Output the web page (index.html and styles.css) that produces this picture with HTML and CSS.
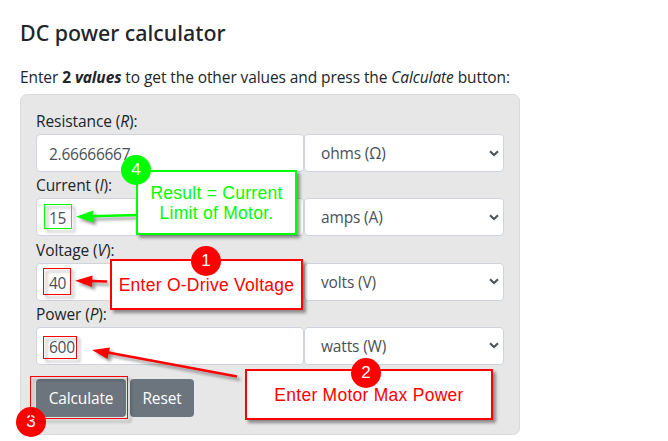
FILE: index.html
```html
<!DOCTYPE html>
<html lang="en">
<head>
<meta charset="utf-8">
<title>DC power calculator</title>
<link rel="stylesheet" href="styles.css">
</head>
<body>
<main class="page">
  <h1 class="title"><span>DC power calculator</span></h1>
  <p class="intro"><span>Enter <b>2 <i>values</i></b> to get the other values and press the <i>Calculate</i> button:</span></p>
  <form class="panel">
    <div class="row">
      <div class="label">Resistance (<i>R</i>):</div>
      <div class="group">
        <div class="input">2.66666667</div>
        <div class="select"><span class="unit">ohms (Ω)</span><svg class="chevron" viewBox="0 0 10 7"><path d="M1 1.2 5 5 9 1.2"/></svg></div>
      </div>
    </div>
    <div class="row">
      <div class="label">Current (<i>I</i>):</div>
      <div class="group">
        <div class="input">15</div>
        <div class="select"><span class="unit">amps (A)</span><svg class="chevron" viewBox="0 0 10 7"><path d="M1 1.2 5 5 9 1.2"/></svg></div>
      </div>
    </div>
    <div class="row">
      <div class="label">Voltage (<i>V</i>):</div>
      <div class="group">
        <div class="input">40</div>
        <div class="select"><span class="unit">volts (V)</span><svg class="chevron" viewBox="0 0 10 7"><path d="M1 1.2 5 5 9 1.2"/></svg></div>
      </div>
    </div>
    <div class="row">
      <div class="label">Power (<i>P</i>):</div>
      <div class="group">
        <div class="input">600</div>
        <div class="select"><span class="unit">watts (W)</span><svg class="chevron" viewBox="0 0 10 7"><path d="M1 1.2 5 5 9 1.2"/></svg></div>
      </div>
    </div>
    <div class="actions">
      <button type="button" class="btn calc">Calculate</button>
      <button type="button" class="btn reset">Reset</button>
    </div>
  </form>

  <svg class="arrows" viewBox="0 0 668 441">
    <g class="green"><path class="line" d="M138 215 90 216.3"/><path class="head" d="M76 216.7 93 210.5V222.2Z"/></g>
    <g class="red"><path class="line" d="M107 281.6 90 281"/><path class="head" d="M75 280.8 92.5 275.5 92 287Z"/></g>
    <g class="red"><path class="line" d="M237 376.5 108 352.6"/><path class="head" d="M92 350 110 347.5 107.5 359Z"/></g>
  </svg>
  <div class="mark green-mark mark-current"></div>
  <div class="mark mark-voltage"></div>
  <div class="mark mark-power"></div>
  <div class="note green-note note-current"><span>Result = Current<br>Limit of Motor.</span></div>
  <div class="note note-voltage"><span>Enter O-Drive Voltage</span></div>
  <div class="note note-power"><span>Enter Motor Max Power</span></div>
  <div class="badge badge-one">1</div>
  <div class="badge badge-two">2</div>
  <div class="badge badge-three">3</div>
  <div class="badge green-badge badge-four">4</div>
  <div class="mark mark-calc"></div>
</main>
</body>
</html>
```
FILE: styles.css
```css
* { box-sizing: border-box; }
body { margin: 0; background: #fff; }
.page {
  position: relative;
  width: 668px;
  height: 441px;
  overflow: hidden;
  padding: 19px 0 0 20px;
  color: #212529;
  font: 15.5px/26px "Open Sans", "Noto Sans", sans-serif;
  letter-spacing: -.09px;
}
.title { margin: 0; font: 500 21.4px/28px "Noto Sans", sans-serif; letter-spacing: 0; }
.intro { margin: 17px 0 4px; line-height: 26px; white-space: nowrap; }
.panel {
  width: 500px;
  height: 341px;
  padding: 13px 15px 0;
  background: #e7e7e7;
  border: 1px solid #d9dadb;
  border-radius: 7px;
}
.row { height: 64.33px; }
.label { height: 26px; line-height: 27px; }
.group { display: flex; }
.input, .select {
  height: 38px;
  padding: 0 12px;
  background: #fff;
  border: 1px solid #ced4da;
  border-radius: 4px;
  color: #495057;
  line-height: 39px;
}
.input { width: 268px; letter-spacing: -.25px; }
.select { width: 200px; display: flex; align-items: center; justify-content: space-between; padding: 0 4px 0 16px; }
.unit { padding-top: 1px; letter-spacing: -.15px; }
.chevron { width: 10px; height: 7px; fill: none; stroke: #495057; stroke-width: 2; }
.actions { display: flex; gap: 4px; margin-top: 13.6px; }
.btn {
  height: 38px;
  padding: 0;
  border: 0;
  border-radius: 4px;
  background: #6c757d;
  color: #fff;
  font: 15.5px/38px "Open Sans", "Noto Sans", sans-serif;
  letter-spacing: -.15px;
}
.calc { width: 90px; }
.reset { width: 64px; }
.arrows { position: absolute; left: 0; top: 0; width: 668px; height: 441px; filter: drop-shadow(3px 3px 1.5px rgba(0, 0, 0, .4)); }
.line { fill: none; stroke-width: 2.5; }
.red { fill: #f00; stroke: #f00; }
.green { fill: #0f0; stroke: #0f0; }
.head { stroke: none; }
.mark { position: absolute; border: 1px solid #f00; filter: drop-shadow(3px 3px 1.5px rgba(0, 0, 0, .4)); }
.green-mark { border-color: #0f0; }
.mark-current { left: 44px; top: 204px; width: 28px; height: 25px; }
.mark-voltage { left: 43px; top: 268px; width: 28px; height: 27px; }
.mark-power { left: 43px; top: 336px; width: 34px; height: 23px; }
.mark-calc { left: 30px; top: 376px; width: 98px; height: 43px; }
.note {
  position: absolute;
  display: flex;
  align-items: center;
  justify-content: center;
  background: #fff;
  border: 2px solid #f00;
  box-shadow: 3px 3px 3px rgba(0, 0, 0, .4);
  color: #f00;
  font: 17.5px/20px "Liberation Sans", sans-serif;
  letter-spacing: .26px;
  text-align: center;
  white-space: nowrap;
}
.green-note { border-color: #0f0; color: #0f0; }
.note-current { left: 136px; top: 170px; width: 161px; height: 65px; }
.note-voltage { left: 110px; top: 259px; width: 193px; height: 51px; }
.note-power { left: 245px; top: 369px; width: 248px; height: 51px; }
.badge {
  position: absolute;
  width: 30px;
  height: 30px;
  border-radius: 50%;
  background: #f00;
  color: #fff;
  font: 17px/30px "Liberation Sans", sans-serif;
  text-align: center;
}
.green-badge { background: #0f0; }
.badge-one { left: 191px; top: 246px; }
.badge-two { left: 351px; top: 358px; }
.badge-three { left: 16px; top: 407px; }
.badge-four { left: 121px; top: 155px; }
```
